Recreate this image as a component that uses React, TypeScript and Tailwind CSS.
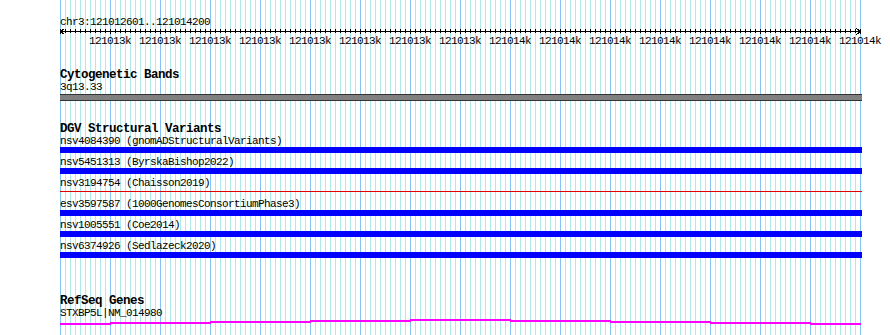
import React from 'react';

const variants = [
  { label: 'nsv4084390 (gnomADStructuralVariants)', kind: 'bar' },
  { label: 'nsv5451313 (ByrskaBishop2022)', kind: 'bar' },
  { label: 'nsv3194754 (Chaisson2019)', kind: 'line' },
  { label: 'esv3597587 (1000GenomesConsortiumPhase3)', kind: 'bar' },
  { label: 'nsv1005551 (Coe2014)', kind: 'bar' },
  { label: 'nsv6374926 (Sedlazeck2020)', kind: 'bar' },
];

const rulerLabels = Array.from({ length: 16 }, (_, i) => (i < 8 ? '121013k' : '121014k'));

// gene line: y centre of each stretch
const geneSegs = [
  { x1: 0, x2: 50, y: 324 },
  { x1: 50, x2: 150, y: 323 },
  { x1: 150, x2: 250, y: 322 },
  { x1: 250, x2: 350, y: 321 },
  { x1: 350, x2: 450, y: 320 },
  { x1: 450, x2: 550, y: 321 },
  { x1: 550, x2: 650, y: 322 },
  { x1: 650, x2: 750, y: 323 },
  { x1: 750, x2: 800, y: 324 },
];

const Ruler: React.FC = () => (
  <svg width={802} height={7} className="block" shapeRendering="crispEdges">
    <rect x={0} y={3} width={801} height={1} fill="#000" />
    {Array.from({ length: 161 }, (_, i) => (
      <rect key={i} x={i * 5} y={1} width={1} height={i % 10 === 0 ? 5 : 4} fill="#000" />
    ))}
    <path d="M0.5 3.5 L4.5 0.5 M0.5 3.5 L4.5 6.5" stroke="#000" strokeWidth={1} fill="none" />
    <path d="M800.5 3.5 L796.5 0.5 M800.5 3.5 L796.5 6.5" stroke="#000" strokeWidth={1} fill="none" />
  </svg>
);

const GeneLine: React.FC = () => (
  <svg width={802} height={8} className="block" shapeRendering="crispEdges">
    {geneSegs.map((s) => (
      <rect key={s.x1} x={s.x1} y={s.y - 320} width={s.x2 - s.x1 + 1} height={2} fill="#ff00ff" />
    ))}
  </svg>
);

const txt = 'whitespace-pre text-[11px] tracking-[-0.6px] leading-[12px]';
const title = 'whitespace-pre text-[12.5px] tracking-[-0.5px] font-bold leading-[12px]';

const App: React.FC = () => {
  return (
    <div className="flex h-[335px] w-[890px] overflow-hidden bg-white font-['Liberation_Mono',monospace] text-black">
      <div className="w-[60px] shrink-0" />
      <div className="h-[335px] w-[802px] shrink-0 bg-[image:repeating-linear-gradient(to_right,#84c4f0_0_1px,transparent_1px_50px),repeating-linear-gradient(to_right,#aeeaea_0_1px,transparent_1px_5px)]">
        {/* Ruler */}
        <div className={`mt-[16px] ${txt}`}>chr3:121012601..121014200</div>
        <Ruler />
        <div className="ml-[25px] flex">
          {rulerLabels.map((l, i) => (
            <div key={i} className={`w-[50px] shrink-0 text-center ${txt}`}>{l}</div>
          ))}
        </div>

        {/* Cytogenetic Bands */}
        <div className={`mt-[22px] ${title}`}>Cytogenetic Bands</div>
        <div className={txt}>3q13.33</div>
        <div className="mt-[1px] h-[7px] w-[802px] border-y border-[#333] bg-[#808080]" />

        {/* DGV */}
        <div className={`mt-[22px] ${title}`}>DGV Structural Variants</div>
        {variants.map((v, i) => (
          <div key={v.label} className={i === 0 ? '' : 'mt-[3px]'}>
            <div className={txt}>{v.label}</div>
            {v.kind === 'bar' ? (
              <div className="h-[6px] w-[802px] bg-[#0000ff]" />
            ) : (
              <div className="h-[6px] pt-[2px]">
                <div className="h-[1px] w-[802px] bg-[#e00000]" />
              </div>
            )}
          </div>
        ))}

        {/* RefSeq */}
        <div className={`mt-[37px] ${title}`}>RefSeq Genes</div>
        <div className={txt}>STXBP5L|NM_014980</div>
        <GeneLine />
      </div>
    </div>
  );
};

export default App;
